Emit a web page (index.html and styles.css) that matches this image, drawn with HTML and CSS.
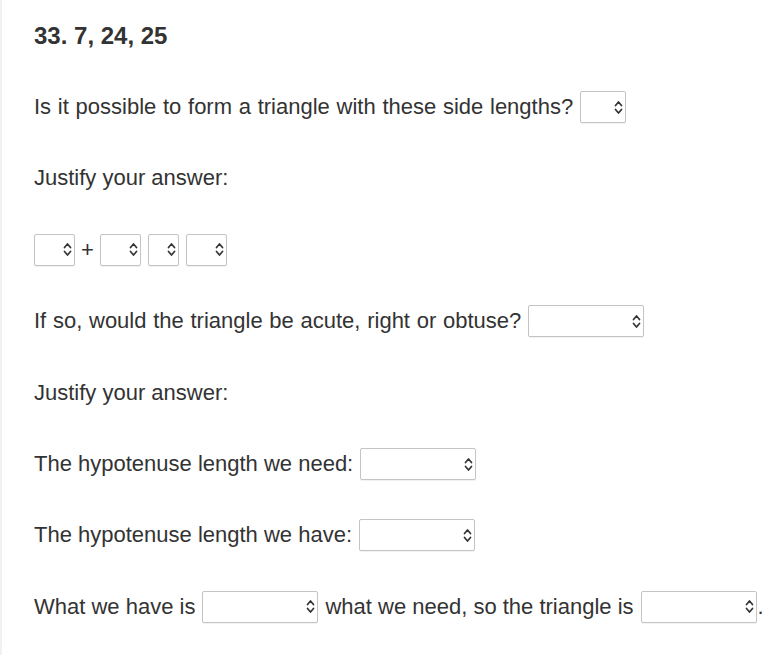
FILE: index.html
```html
<!DOCTYPE html>
<html lang="en">

<head>
    <meta charset="UTF-8" />
    <meta name="viewport" content="width=device-width, initial-scale=1" />
    <title>Triangle Side Lengths</title>
    <link rel="stylesheet" href="styles.css">
</head>

<body>
    <div class="sheet">
        <div class="row title">33. 7, 24, 25</div>

        <div class="row">
            <span class="long">Is it possible to form a triangle with these side lengths?</span>
            <span class="pick w45"><svg width="9" height="15" viewBox="0 0 9 15"><path d="M1.5 5.5 L4.5 2 L7.5 5.5 M1.5 9.5 L4.5 13 L7.5 9.5" /></svg></span>
        </div>

        <div class="row">Justify your answer:</div>

        <div class="row">
            <span class="pick w40"><svg width="9" height="15" viewBox="0 0 9 15"><path d="M1.5 5.5 L4.5 2 L7.5 5.5 M1.5 9.5 L4.5 13 L7.5 9.5" /></svg></span>
            <span class="plus">+</span>
            <span class="pick w40"><svg width="9" height="15" viewBox="0 0 9 15"><path d="M1.5 5.5 L4.5 2 L7.5 5.5 M1.5 9.5 L4.5 13 L7.5 9.5" /></svg></span>
            <span class="pick w30"><svg width="9" height="15" viewBox="0 0 9 15"><path d="M1.5 5.5 L4.5 2 L7.5 5.5 M1.5 9.5 L4.5 13 L7.5 9.5" /></svg></span>
            <span class="pick w40"><svg width="9" height="15" viewBox="0 0 9 15"><path d="M1.5 5.5 L4.5 2 L7.5 5.5 M1.5 9.5 L4.5 13 L7.5 9.5" /></svg></span>
        </div>

        <div class="row">
            <span class="long">If so, would the triangle be acute, right or obtuse?</span>
            <span class="pick wide"><svg width="9" height="15" viewBox="0 0 9 15"><path d="M1.5 5.5 L4.5 2 L7.5 5.5 M1.5 9.5 L4.5 13 L7.5 9.5" /></svg></span>
        </div>

        <div class="row">Justify your answer:</div>

        <div class="row">
            <span>The hypotenuse length we need:</span>
            <span class="pick wide"><svg width="9" height="15" viewBox="0 0 9 15"><path d="M1.5 5.5 L4.5 2 L7.5 5.5 M1.5 9.5 L4.5 13 L7.5 9.5" /></svg></span>
        </div>

        <div class="row">
            <span>The hypotenuse length we have:</span>
            <span class="pick wide"><svg width="9" height="15" viewBox="0 0 9 15"><path d="M1.5 5.5 L4.5 2 L7.5 5.5 M1.5 9.5 L4.5 13 L7.5 9.5" /></svg></span>
        </div>

        <div class="row">
            <span>What we have is</span>
            <span class="pick wide"><svg width="9" height="15" viewBox="0 0 9 15"><path d="M1.5 5.5 L4.5 2 L7.5 5.5 M1.5 9.5 L4.5 13 L7.5 9.5" /></svg></span>
            <span>what we need, so the triangle is</span>
            <span class="pick wide"><svg width="9" height="15" viewBox="0 0 9 15"><path d="M1.5 5.5 L4.5 2 L7.5 5.5 M1.5 9.5 L4.5 13 L7.5 9.5" /></svg></span>
            <span class="dot">.</span>
        </div>
    </div>
</body>

</html>
```

FILE: styles.css
```css
body {
    margin: 0;
    font-family: "Liberation Sans", Arial, sans-serif;
    color: #333;
    background-color: #fff;
    border-left: 2px solid #f1f1f1;
    min-height: 655px;
    box-sizing: border-box;
}

.sheet {
    padding-left: 32px;
}

.row {
    display: flex;
    align-items: center;
    gap: 7px;
    height: 71.4px;
    font-size: 22px;
    white-space: nowrap;
}

.title {
    font-size: 24px;
    font-weight: bold;
}

.long {
    word-spacing: 0.6px;
}

.pick {
    display: inline-flex;
    align-items: center;
    justify-content: flex-end;
    box-sizing: border-box;
    height: 32px;
    padding-right: 2px;
    border: 1px solid #c4c4c4;
    border-radius: 2px;
    background: #fff;
    box-shadow: 0 1px 1px rgba(0, 0, 0, 0.06);
}

.pick svg path {
    fill: none;
    stroke: #333;
    stroke-width: 1.7;
    stroke-linecap: round;
    stroke-linejoin: round;
}

.w45 {
    width: 46px;
}

.w40 {
    width: 41px;
}

.w30 {
    width: 31px;
}

.wide {
    width: 116px;
}

.plus {
    margin: 0 -1px;
}

.dot {
    margin-left: -6px;
}
```
